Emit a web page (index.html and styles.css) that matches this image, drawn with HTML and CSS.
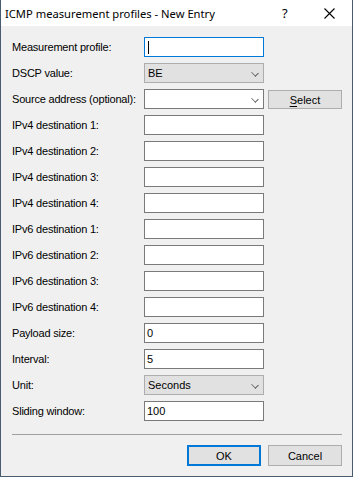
FILE: index.html
```html
<!DOCTYPE html>
<html lang="en">
<head>
    <meta charset="UTF-8">
    <meta name="viewport" content="width=device-width, initial-scale=1.0">
    <title>ICMP measurement profiles - New Entry</title>
    <link rel="stylesheet" href="styles.css">
</head>
<body>
    <div class="window">
        <div class="titlebar">
            <span class="title">ICMP measurement profiles - New Entry</span>
            <span class="help">?</span>
            <span class="close">
                <svg width="11" height="11" viewBox="0 0 11 11"><path d="M0.5 0.5 L10.5 10.5 M10.5 0.5 L0.5 10.5" stroke="#000" stroke-width="1.1" fill="none"/></svg>
            </span>
        </div>

        <div class="content">
            <div class="form-grid">
                <label>Measurement profile:</label>
                <div class="field text focused"><span class="caret"></span></div>
                <span></span>

                <label>DSCP value:</label>
                <div class="field combo">BE<span class="chevron"></span></div>
                <span></span>

                <label>Source address (optional):</label>
                <div class="field text editcombo"><span class="chevron"></span></div>
                <button class="btn select"><u>S</u>elect</button>

                <label>IPv4 destination 1:</label>
                <div class="field text"></div>
                <span></span>

                <label>IPv4 destination 2:</label>
                <div class="field text"></div>
                <span></span>

                <label>IPv4 destination 3:</label>
                <div class="field text"></div>
                <span></span>

                <label>IPv4 destination 4:</label>
                <div class="field text"></div>
                <span></span>

                <label>IPv6 destination 1:</label>
                <div class="field text"></div>
                <span></span>

                <label>IPv6 destination 2:</label>
                <div class="field text"></div>
                <span></span>

                <label>IPv6 destination 3:</label>
                <div class="field text"></div>
                <span></span>

                <label>IPv6 destination 4:</label>
                <div class="field text"></div>
                <span></span>

                <label>Payload size:</label>
                <div class="field text">0</div>
                <span></span>

                <label>Interval:</label>
                <div class="field text">5</div>
                <span></span>

                <label>Unit:</label>
                <div class="field combo">Seconds<span class="chevron"></span></div>
                <span></span>

                <label>Sliding window:</label>
                <div class="field text">100</div>
                <span></span>
            </div>

            <div class="separator"></div>

            <div class="button-row">
                <button class="btn default">OK</button>
                <button class="btn">Cancel</button>
            </div>
        </div>
    </div>
</body>
</html>
```

FILE: styles.css
```css
body {
    margin: 0;
    background-color: #f0f0f0;
}
.window {
    width: 353px;
    height: 477px;
    box-sizing: border-box;
    border: 1px solid #485c70;
    border-top: none;
    background-color: #f0f0f0;
    display: flex;
    flex-direction: column;
}
.titlebar {
    height: 26px;
    background-color: #fff;
    display: flex;
    align-items: center;
    font-family: "Segoe UI", "Noto Sans", sans-serif;
    font-size: 11.2px;
    color: #000;
}
.title {
    padding-left: 4px;
    flex: 1;
    white-space: nowrap;
}
.help {
    width: 7px;
    margin-right: 35px;
    font-size: 13px;
}
.close {
    width: 11px;
    height: 11px;
    margin-right: 17px;
    display: flex;
}
.content {
    padding: 11px 10px 0 11px;
    font-family: "Liberation Sans", Arial, sans-serif;
    font-size: 11px;
    color: #000;
}
.form-grid {
    display: grid;
    grid-template-columns: 128px 120px 74px;
    column-gap: 4px;
    grid-auto-rows: 20px;
    row-gap: 6px;
    align-items: center;
}
.form-grid label {
    margin-right: -4px;
    white-space: nowrap;
    letter-spacing: -0.2px;
}
.field {
    height: 20px;
    box-sizing: border-box;
    border: 1px solid #7a7a7a;
    background-color: #fff;
    position: relative;
    display: flex;
    align-items: center;
    padding-left: 2px;
}
.field.focused {
    border-color: #0078d7;
}
.field.combo {
    background-color: #e1e1e1;
    border-color: #adadad;
    padding-left: 3px;
}
.caret {
    width: 1px;
    height: 13px;
    background-color: #000;
    margin-left: 1px;
}
.chevron {
    position: absolute;
    right: 5px;
    top: 6px;
    width: 5px;
    height: 5px;
    border-right: 1px solid #606060;
    border-bottom: 1px solid #606060;
    transform: rotate(45deg) scaleY(0.8);
}
.btn {
    height: 21px;
    box-sizing: border-box;
    border: 1px solid #adadad;
    background-color: #e1e1e1;
    font-family: "Liberation Sans", Arial, sans-serif;
    font-size: 11px;
    color: #000;
    padding: 0;
    margin: 0;
}
.btn.select {
    height: 19px;
    align-self: end;
}
.btn.select u {
    text-decoration-thickness: 1px;
    text-underline-offset: 2px;
}
.separator {
    height: 1px;
    width: 330px;
    margin-top: 13px;
    background-color: #a0a0a0;
}
.button-row {
    display: flex;
    justify-content: flex-end;
    gap: 7px;
    margin-top: 10px;
}
.button-row .btn {
    width: 74px;
}
.btn.default {
    border: 2px solid #0078d7;
}
```
